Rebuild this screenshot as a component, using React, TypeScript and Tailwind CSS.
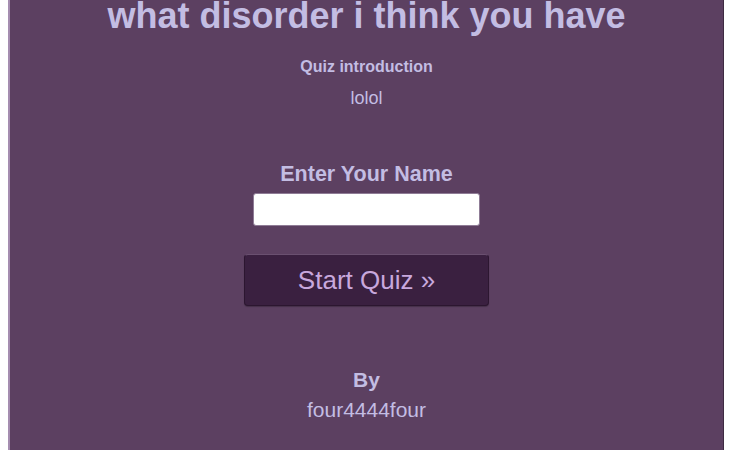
import React from "react";

export default function App() {
  return (
    <div className="flex h-[450px] w-[735px] overflow-hidden bg-white" style={{ fontFamily: '"Liberation Sans", Arial, sans-serif' }}>
      <div className="ml-[8px] flex w-[716px] flex-col items-center border-l-2 border-r border-l-[#a58db0] border-r-[#3e2b42] bg-[#5c4061]">
        <h1 className="mt-[-4px] text-[36px] font-bold leading-[40px] text-[#c3bde3]">what disorder i think you have</h1>
        <div className="mt-[21px] text-[16px] font-bold leading-[20px] text-[#c3bde3]">Quiz introduction</div>
        <div className="mt-[9px] text-[18px] leading-[24px] text-[#c3bde3]">lolol</div>
        <div className="mt-[51px] text-[21.5px] font-bold leading-[26px] text-[#c3bde3]">Enter Your Name</div>
        <input className="mt-[6px] h-[33px] w-[227px] rounded-[3px] border border-[#8f7c96] bg-white" />
        <button className="mt-[28px] h-[52px] w-[245px] rounded-[4px] border border-[#2c1630] border-t-[#6a5070] bg-[#3a2040] text-[26px] leading-[30px] text-[#c8a8dd] shadow-[0_1px_1px_rgba(0,0,0,0.25)]">
          Start Quiz »
        </button>
        <div className="mt-[61px] text-[21px] font-bold leading-[26px] text-[#c3bde3]">By</div>
        <div className="mt-[4px] text-[21px] leading-[26px] text-[#c3bde3]">four4444four</div>
      </div>
    </div>
  );
}
